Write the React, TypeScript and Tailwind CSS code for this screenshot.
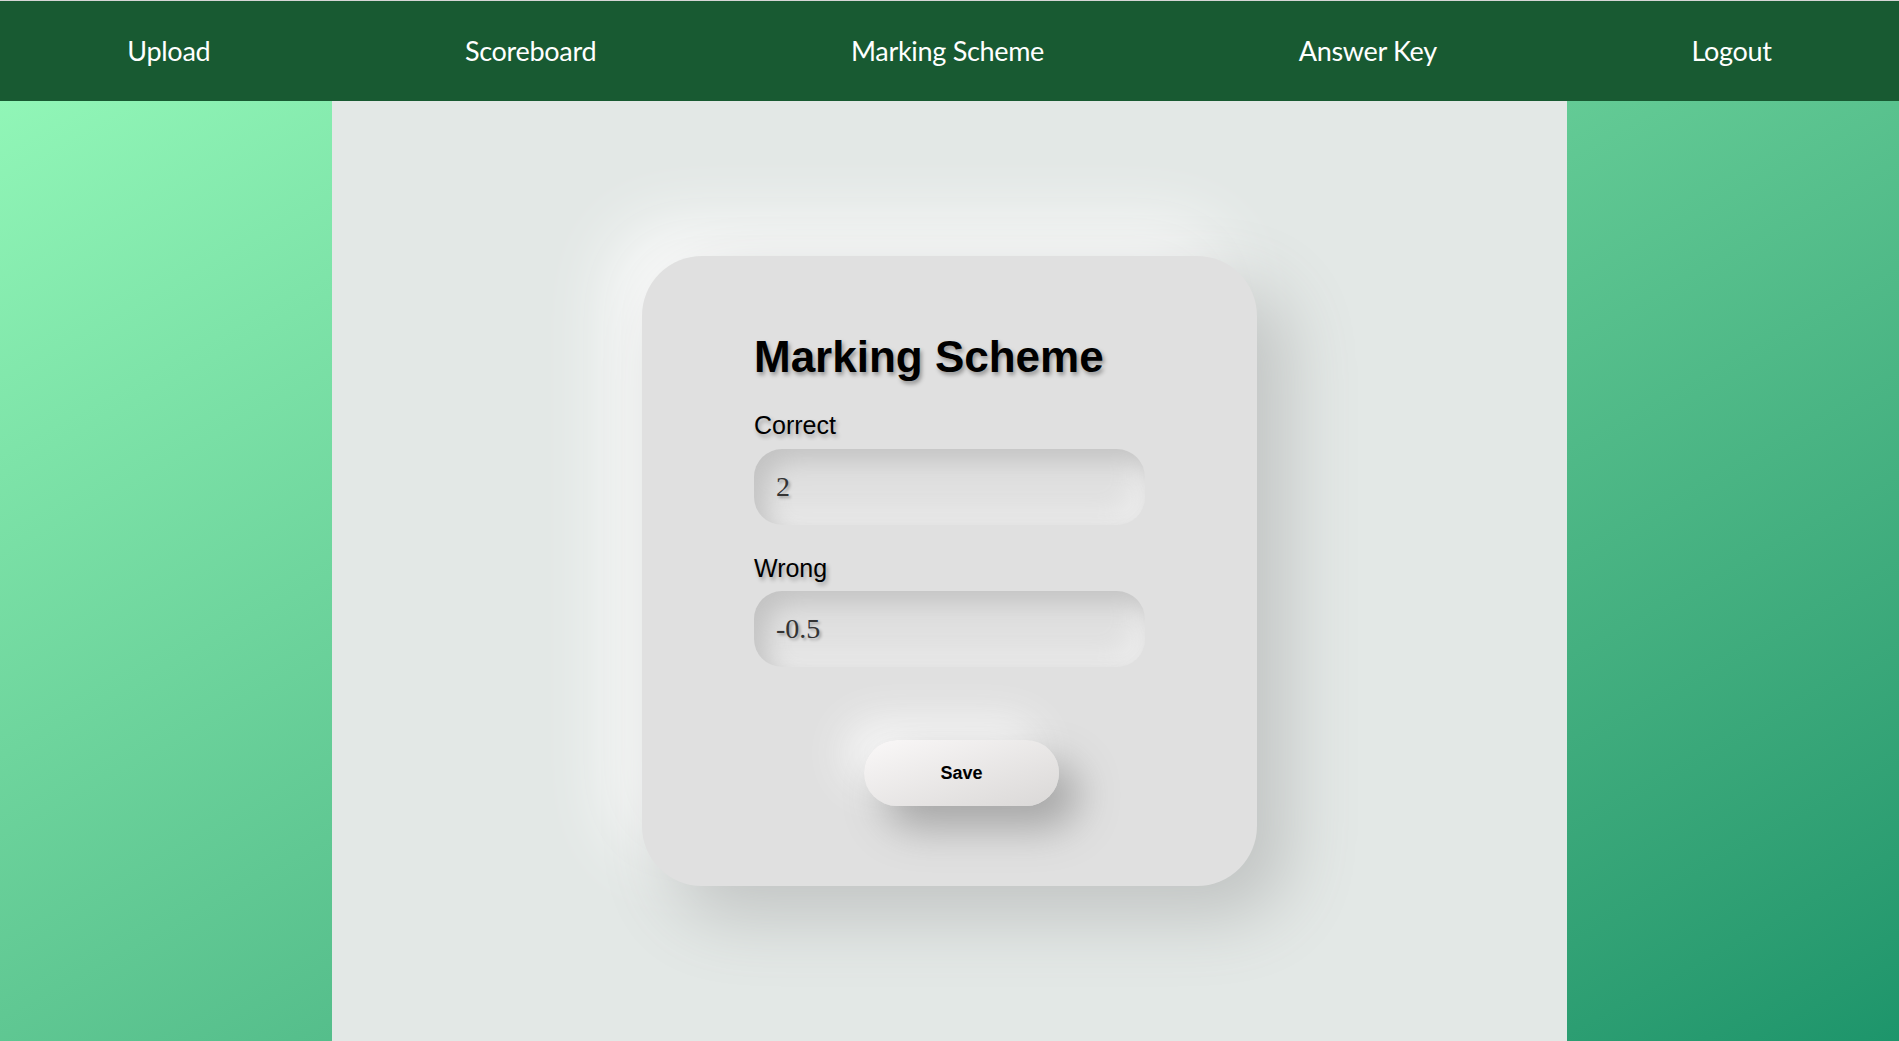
import { useState } from 'react';

const navItems = ['Upload', 'Scoreboard', 'Marking Scheme', 'Answer Key', 'Logout'];

export default function App() {
  const [correct, setCorrect] = useState('2');
  const [wrong, setWrong] = useState('-0.5');

  return (
    <div className="h-screen w-full flex flex-col bg-linear-to-br from-[#96fbbb] to-[#1d956b] overflow-hidden">
      {/* Top nav */}
      <nav className="h-[101px] shrink-0 border-t border-[#d6d6d6] bg-[#185a32] flex items-center justify-around font-['Lato',sans-serif] text-white text-[27px]">
        {navItems.map((item) => (
          <a key={item} href="#" className="tracking-[-0.3px]">
            {item}
          </a>
        ))}
      </nav>

      <div className="flex-1 flex">
        <div className="w-[17.5%]" />

        {/* Main panel */}
        <main className="w-[65%] bg-[#e3e8e6] flex items-center justify-center">
          <div className="w-[615px] h-[630px] rounded-[60px] bg-[#e0e0e0] shadow-[30px_30px_70px_#c0c3c2,-30px_-30px_70px_#fbfbfb] px-[112px] pt-[76px] font-['Liberation_Sans',Arial,sans-serif] flex flex-col">
            <h1 className="text-[44px] leading-[50px] font-bold text-black [text-shadow:2px_3px_4px_rgba(0,0,0,0.35)]">
              Marking Scheme
            </h1>

            <label className="mt-[28px] text-[25px] leading-[30px] text-black [text-shadow:2px_3px_4px_rgba(0,0,0,0.3)]">
              Correct
            </label>
            <input
              value={correct}
              onChange={(e) => setCorrect(e.target.value)}
              className="mt-[9px] h-[76px] w-full rounded-[28px] bg-[#e0e0e0] pl-[22px] outline-none font-['Liberation_Serif',serif] text-[28px] text-[#333] [text-shadow:2px_2px_3px_rgba(0,0,0,0.3)] shadow-[inset_12px_12px_24px_#c3c3c3,inset_-12px_-12px_24px_#ececec]"
            />

            <label className="mt-[28px] text-[25px] leading-[30px] text-black [text-shadow:2px_3px_4px_rgba(0,0,0,0.3)]">
              Wrong
            </label>
            <input
              value={wrong}
              onChange={(e) => setWrong(e.target.value)}
              className="mt-[8px] h-[76px] w-full rounded-[28px] bg-[#e0e0e0] pl-[22px] outline-none font-['Liberation_Serif',serif] text-[28px] text-[#333] [text-shadow:2px_2px_3px_rgba(0,0,0,0.3)] shadow-[inset_12px_12px_24px_#c3c3c3,inset_-12px_-12px_24px_#ececec]"
            />

            <div className="mt-[73px] flex justify-center pl-[24px]">
              <button className="w-[195px] h-[66px] rounded-full bg-linear-to-br from-[#faf8f8] to-[#dad8d7] text-[18px] font-bold text-black shadow-[20px_22px_40px_#a6a6a6,-20px_-20px_40px_#f6f6f6]">
                Save
              </button>
            </div>
          </div>
        </main>

        <div className="w-[17.5%]" />
      </div>
    </div>
  );
}
